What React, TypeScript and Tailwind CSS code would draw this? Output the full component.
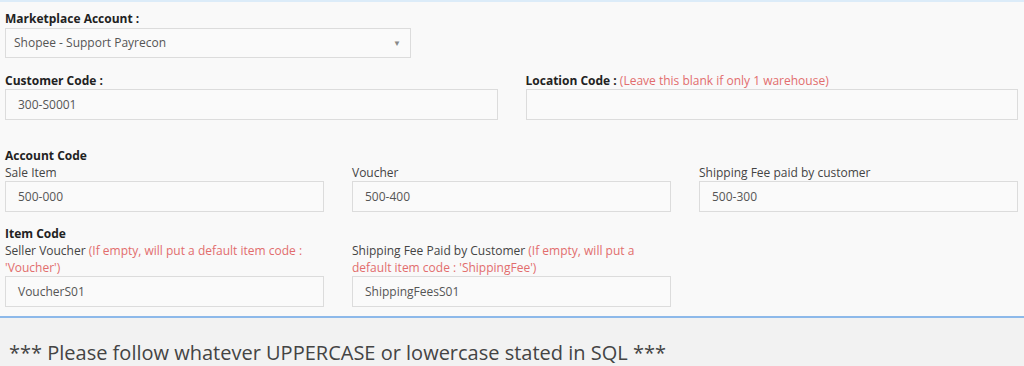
const font = { fontFamily: '"Open Sans", "Noto Sans", sans-serif' };

const Input = ({ value }: { value?: string }) => (
  <div className="h-[31px] w-full border border-[#dcdcdc] bg-[#fafafa] flex items-center px-[12px] text-[12px] text-[#555]">
    {value}
  </div>
);

const Label = ({ children, bold }: { children: React.ReactNode; bold?: boolean }) => (
  <div className={`text-[12px] leading-[17px] ${bold ? "font-bold text-[#222]" : "text-[#444]"}`}>{children}</div>
);

const Hint = ({ children }: { children: React.ReactNode }) => (
  <span className="font-normal text-[#e26d6d]">{children}</span>
);

export default function App() {
  return (
    <div className="w-[1024px] h-[366px] overflow-hidden bg-[#f9f9f9] border-t-2 border-[#dcecf9] flex flex-col" style={font}>
      <div className="pl-[5px] pr-[6px] pt-[8px]">
        {/* Marketplace account */}
        <Label bold>Marketplace Account :</Label>
        <div className="mt-[1px] w-[406px] h-[30px] border border-[#dcdcdc] bg-[#fafafa] flex items-center justify-between px-[8px] text-[12px] text-[#555]">
          <span>Shopee - Support Payrecon</span>
          <span className="text-[8px] text-[#888] pr-[1px]">▼</span>
        </div>

        {/* Customer / Location */}
        <div className="mt-[14px] grid grid-cols-2 gap-x-[28px]">
          <div>
            <Label bold>Customer Code :</Label>
            <Input value="300-S0001" />
          </div>
          <div>
            <Label bold>
              Location Code : <Hint>(Leave this blank if only 1 warehouse)</Hint>
            </Label>
            <Input />
          </div>
        </div>

        {/* Account code */}
        <div className="mt-[27px]">
          <Label bold>Account Code</Label>
          <div className="grid grid-cols-3 gap-x-[28px]">
            <div>
              <Label>Sale Item</Label>
              <Input value="500-000" />
            </div>
            <div>
              <Label>Voucher</Label>
              <Input value="500-400" />
            </div>
            <div>
              <Label>Shipping Fee paid by customer</Label>
              <Input value="500-300" />
            </div>
          </div>
        </div>

        {/* Item code */}
        <div className="mt-[13px]">
          <Label bold>Item Code</Label>
          <div className="grid grid-cols-3 gap-x-[28px]">
            <div className="flex flex-col">
              <div className="pr-[10px]">
                <Label>
                  Seller Voucher <Hint>(If empty, will put a default item code : 'Voucher')</Hint>
                </Label>
              </div>
              <Input value="VoucherS01" />
            </div>
            <div className="flex flex-col">
              <div className="pr-[10px]">
                <Label>
                  Shipping Fee Paid by Customer <Hint>(If empty, will put a default item code : 'ShippingFee')</Hint>
                </Label>
              </div>
              <Input value="ShippingFeesS01" />
            </div>
          </div>
        </div>
      </div>

      {/* Notice */}
      <div className="mt-[9px] flex-1 border-t-2 border-[#8db9ea] bg-[#f2f2f2] pl-[9px] pt-[25px]">
        <div className="text-[20px] leading-[20px] text-[#444]">
          *** Please follow whatever UPPERCASE or lowercase stated in SQL ***
        </div>
      </div>
    </div>
  );
}
